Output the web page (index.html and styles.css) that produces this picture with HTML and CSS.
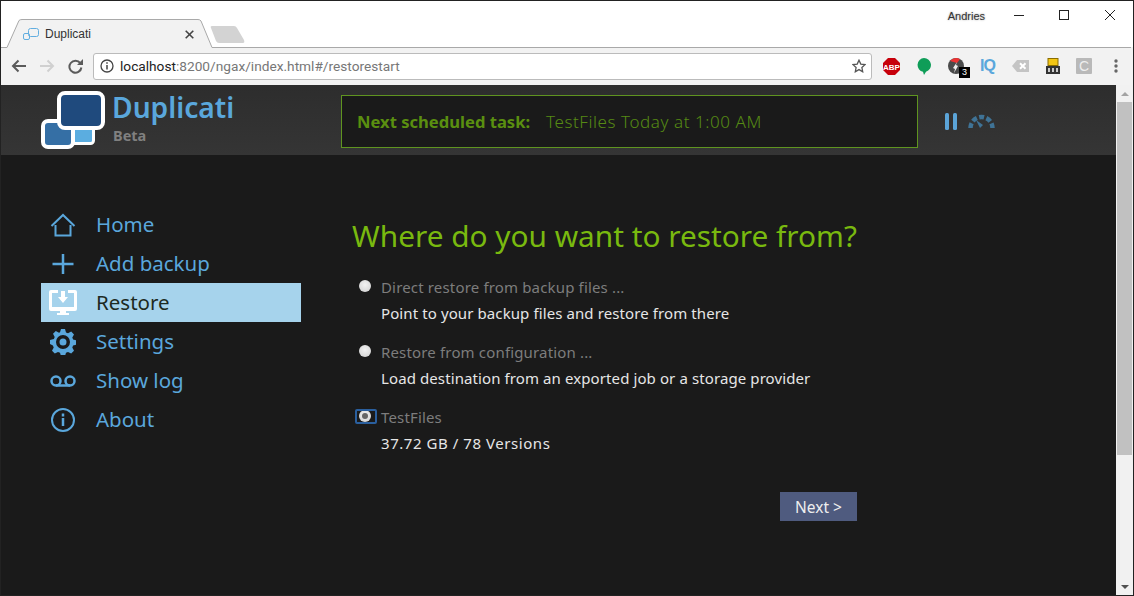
FILE: index.html
```html
<!DOCTYPE html>
<html lang="en">
<head>
<meta charset="utf-8">
<title>Duplicati</title>
<link rel="stylesheet" href="styles.css">
</head>
<body>
<div class="window">
  <div class="tabstrip">
    <svg class="tabshape" width="240" height="47" viewBox="0 0 240 47">
      <path d="M0 46.500H6L18 19.500Q19 18.500 21 18.500H197Q199 18.500 200 20L211 46.500H1130" fill="#f2f2f2" stroke="#a9a9a9"/>
      <path d="M210 27Q209 25 211 25H233Q235 25 236 27L243 39Q244 42 242 42H218Q216 42 215 40Z" fill="#d3d3d3"/>
    </svg>
    <div class="tab">
      <svg class="favicon" width="16" height="13" viewBox="0 0 16 13" fill="none" stroke="#62aee0"><rect x="5.500" y="0.500" width="10" height="8" rx="2"/><rect x="0.500" y="5.500" width="6" height="6" rx="1.500"/></svg>
      <span class="tabtitle">Duplicati</span>
      <svg class="tabclose" width="9" height="9" viewBox="0 0 9 9" stroke="#444" stroke-width="1.600"><path d="M.7.7l7.600 7.600M8.300.7L.7 8.300"/></svg>
    </div>
    <div class="profile">Andries</div>
    <div class="winctl">
      <svg width="46" height="20" viewBox="0 0 46 20" stroke="#222"><path d="M19 14.500H29"/></svg>
      <svg width="46" height="20" viewBox="0 0 46 20" fill="none" stroke="#222"><rect x="18.500" y="9.500" width="9" height="9"/></svg>
      <svg width="46" height="20" viewBox="0 0 46 20" stroke="#222"><path d="M18 9l10 10M28 9L18 19"/></svg>
    </div>
  </div>
  <div class="toolbar">
    <svg class="navicon" width="16" height="14" viewBox="0 0 16 14" fill="none" stroke="#5b5b5b" stroke-width="2"><path d="M15 7H2M7.500 1.500L2 7l5.500 5.500"/></svg>
    <svg class="navicon fwd" width="16" height="14" viewBox="0 0 16 14" fill="none" stroke="#d0d0d0" stroke-width="2"><path d="M1 7h13M8.500 1.500L14 7l-5.500 5.500"/></svg>
    <svg class="navicon reload" width="15" height="15" viewBox="0 0 15 15" fill="none"><path d="M12.300 4.200A6 6 0 1 0 13.400 8.500" stroke="#5b5b5b" stroke-width="2"/><path d="M9 6h6V0z" fill="#5b5b5b"/></svg>
    <div class="omnibox">
      <svg width="14" height="14" viewBox="0 0 14 14" fill="none" stroke="#444" stroke-width="1.300"><circle cx="7" cy="7" r="6"/><path d="M7 6v4.500M7 3.300v1.500" stroke-width="1.500"/></svg>
      <span class="url"><span class="urlhost">localhost</span>:8200/ngax/index.html#/restorestart</span>
      <svg class="star" width="14" height="14" viewBox="0 0 14 14" fill="none" stroke="#555" stroke-width="1.300"><path d="M7 1.200l1.800 3.900 4.200.5-3.100 2.900.8 4.200L7 10.600l-3.700 2.100.8-4.200L1 5.600l4.200-.5z"/></svg>
    </div>
    <div class="exts">
      <svg width="17" height="17" viewBox="0 0 17 17"><path d="M5 0h7l5 5v7l-5 5H5l-5-5V5z" fill="#c7000b"/><text x="8.500" y="11.500" class="abp">ABP</text></svg>
      <svg class="ext-green" width="14" height="17" viewBox="0 0 14 17"><path d="M7 0a7 7 0 0 1 2 13.700L7 17l-1-3.200A7 7 0 0 1 7 0z" fill="#0f9d58"/></svg>
      <span class="extbadge">
        <svg width="16" height="16" viewBox="0 0 16 16"><circle cx="8" cy="8" r="8" fill="#4a4a4a"/><path d="M2 3a7.500 7.500 0 0 1 10-1.800L9 5z" fill="#e33"/><path d="M9 4L5 10l2 1-1 4 4-7-2-1z" fill="#eee"/></svg>
        <span class="badgenum">3</span>
      </span>
      <span class="iq">IQ</span>
      <svg class="ext-del" width="17" height="12" viewBox="0 0 17 12"><path d="M5 0h12v12H5L0 6z" fill="#c4c4c4"/><path d="M8 3.200l5.500 5.500M13.500 3.200L8 8.800" stroke="#fff" stroke-width="2"/></svg>
      <svg class="ext-tab" width="14" height="17" viewBox="0 0 14 17"><rect x="2" y="0.500" width="10" height="7" fill="#f3c614" stroke="#8a6d00"/><rect x="0" y="8" width="14" height="8" fill="#333"/><path d="M3 10v4M7 10v4M11 10v4" stroke="#fff" stroke-width="1.500"/></svg>
      <span class="cext">C</span>
      <svg class="dots" width="4" height="14" viewBox="0 0 4 14" fill="#666"><circle cx="2" cy="2" r="1.700"/><circle cx="2" cy="7" r="1.700"/><circle cx="2" cy="12" r="1.700"/></svg>
    </div>
  </div>
  <div class="viewport">
    <div class="page">
      <header class="apphead">
        <div class="brand">
          <svg class="logo" width="66" height="60" viewBox="0 0 66 60">
            <rect x="30" y="30" width="22.500" height="22.500" rx="3" fill="#5bade0" stroke="#fff" stroke-width="3"/>
            <rect x="2" y="30" width="30" height="26" rx="5" fill="#356fa5" stroke="#fff" stroke-width="4"/>
            <rect x="18" y="2" width="44" height="35" rx="6" fill="#1f4a7d" stroke="#fff" stroke-width="4"/>
          </svg>
          <div class="brandtext">
            <div class="brandname">Duplicati</div>
            <div class="brandsub">Beta</div>
          </div>
        </div>
        <div class="taskbox"><b>Next scheduled task:</b><span>TestFiles Today at 1:00 AM</span></div>
        <svg class="pause" width="12" height="17" viewBox="0 0 12 17" fill="#5ba4d8"><rect width="4" height="17" rx="1.500"/><rect x="8" width="4" height="17" rx="1.500"/></svg>
        <svg class="gauge" width="27" height="15" viewBox="0 0 27 15" fill="none" stroke="#3f7396"><path d="M2.500 14A11 11 0 0 1 24.500 14" stroke-width="4.500" stroke-dasharray="5 2.400"/><path d="M8 6L15 11L12 14z" fill="#3f7396" stroke="none"/></svg>
      </header>
      <div class="appbody">
        <nav class="sidenav">
          <a class="navitem"><span class="ico"><svg width="26" height="24" viewBox="0 0 26 24" fill="none" stroke="currentColor" stroke-width="2"><path d="M5.500 12v10.500h15V12M1.500 13L13 2l11.500 11"/></svg></span><span class="navlabel">Home</span></a>
          <a class="navitem"><span class="ico"><svg width="26" height="24" viewBox="0 0 26 24" fill="none" stroke="currentColor" stroke-width="2.500"><path d="M13 2v20M2.500 12h21"/></svg></span><span class="navlabel">Add backup</span></a>
          <a class="navitem active"><span class="ico"><svg width="28" height="26" viewBox="0 0 28 26"><path d="M2 0h7v3H3v14h22V3h-6V0h7a2 2 0 0 1 2 2v17a2 2 0 0 1-2 2H17v2h3v2H8v-2h3v-2H2a2 2 0 0 1-2-2V2a2 2 0 0 1 2-2z" fill="#fff"/><path d="M12 1h4v6h3l-5 6-5-6h3z" fill="#fff"/></svg></span><span class="navlabel">Restore</span></a>
          <a class="navitem"><span class="ico"><svg width="26" height="26" viewBox="0 0 26 26"><path fill="currentColor" fill-rule="evenodd" d="M11 0h4l1 3.500 2 .8 3.200-1.700 2.800 2.800-1.700 3.200.8 2 3.900 1v4l-3.900 1-.8 2 1.700 3.200-2.800 2.800-3.200-1.700-2 .8-1 3.500h-4l-1-3.500-2-.8-3.200 1.700-2.800-2.800 1.700-3.200-.8-2L0 15v-4l3.900-1 .8-2L3 4.800 5.800 2 9 3.700l1-.4zM13 6a7 7 0 1 0 0 14 7 7 0 0 0 0-14zm0 3.500a3.500 3.500 0 1 1 0 7 3.500 3.500 0 0 1 0-7z"/></svg></span><span class="navlabel">Settings</span></a>
          <a class="navitem"><span class="ico"><svg width="26" height="14" viewBox="0 0 26 14" fill="none" stroke="currentColor" stroke-width="2.500"><circle cx="6" cy="7" r="4.500"/><circle cx="20" cy="7" r="4.500"/><path d="M6 11.500h14"/></svg></span><span class="navlabel">Show log</span></a>
          <a class="navitem"><span class="ico"><svg width="24" height="24" viewBox="0 0 24 24" fill="none" stroke="currentColor" stroke-width="2"><circle cx="12" cy="12" r="11"/><path d="M12 10v8M12 5.500v3" stroke-width="2.500"/></svg></span><span class="navlabel">About</span></a>
        </nav>
        <main class="content">
          <h1 class="title">Where do you want to restore from?</h1>
          <div class="option">
            <span class="radio"></span>
            <div><div class="optname">Direct restore from backup files ...</div><div class="optdesc">Point to your backup files and restore from there</div></div>
          </div>
          <div class="option">
            <span class="radio"></span>
            <div><div class="optname">Restore from configuration ...</div><div class="optdesc">Load destination from an exported job or a storage provider</div></div>
          </div>
          <div class="option">
            <span class="radio checked"></span>
            <div><div class="optname">TestFiles</div><div class="optdesc optstat">37.72 GB / 78 Versions</div></div>
          </div>
          <div class="actions"><button class="next">Next &gt;</button></div>
        </main>
      </div>
    </div>
    <div class="scrollbar">
      <span class="arrow up"></span>
      <span class="thumb"></span>
      <span class="arrow down"></span>
    </div>
  </div>
</div>
</body>
</html>
```
FILE: styles.css
```css
*, *::before, *::after { box-sizing: border-box; }
html, body { margin: 0; height: 100%; overflow: hidden; }
body { font-family: "Noto Sans", sans-serif; background: #fff; }
.window { width: 1134px; height: 596px; display: flex; flex-direction: column; border: 1px solid #222; }
.tabstrip { height: 46px; flex: none; position: relative; display: flex; align-items: flex-start; background: #fff; }
.tabshape { position: absolute; left: 0; top: 0; overflow: visible; }
.tab { position: relative; margin: 26px 0 0 22px; width: 172px; display: flex; align-items: center; font: 12px "Liberation Sans", sans-serif; color: #333; }
.tabtitle { margin-left: 6px; flex: 1; }
.tabclose { margin-right: 1px; }
.profile { position: relative; margin: 9px 0 0 auto; font: 11px "Liberation Sans", sans-serif; color: #333; text-shadow: 0 0 2px #999; }
.winctl { position: relative; display: flex; margin-left: 10px; }
.toolbar { height: 38px; flex: none; background: #f2f2f2; display: flex; align-items: center; padding-left: 10px; }
.navicon { flex: none; }
.fwd { margin-left: 12px; }
.reload { margin-left: 13px; }
.omnibox { margin-left: 10px; width: 779px; height: 27px; background: #fff; border: 1px solid #bbb; border-radius: 3px; display: flex; align-items: center; padding: 0 5px 0 6px; }
.url { margin-left: 6px; flex: 1; font: 13.7px "Roboto", sans-serif; color: #777; white-space: nowrap; }
.urlhost { color: #222; }
.star { margin-left: auto; }
.exts { display: flex; align-items: center; margin-left: 11px; }
.exts > * { flex: none; }
.ext-green { margin-left: 17px; }
.extbadge { position: relative; margin-left: 17px; width: 16px; height: 16px; }
.extbadge svg { display: block; }
.badgenum { position: absolute; left: 11px; top: 9px; width: 11px; height: 11px; background: #000; color: #fff; font: 9px/11px "Liberation Sans", sans-serif; text-align: center; }
.iq { margin-left: 16px; width: 15px; font: bold 16px "Liberation Sans", sans-serif; color: #5aa7dc; letter-spacing: -1px; }
.ext-del { margin-left: 17px; }
.ext-tab { margin-left: 17px; }
.cext { margin-left: 16px; width: 16px; height: 16px; background: #b9b9b9; color: #eee; font: 14px/16px "Liberation Sans", sans-serif; text-align: center; border-radius: 1px; }
.dots { margin-left: 22px; }
.viewport { flex: 1; min-height: 0; display: flex; }
.page { flex: 1; min-width: 0; background: #1a1a1a; display: flex; flex-direction: column; }
.apphead { height: 70px; flex: none; display: flex; align-items: flex-start; background: linear-gradient(#2d2d2d, #353535); }
.brand { width: 340px; flex: none; display: flex; padding: 6px 0 0 40px; }
.logo { flex: none; }
.brandtext { margin-left: 6px; }
.brandname { font-size: 28.2px; line-height: 32px; font-weight: 600; color: #5aa7dc; white-space: nowrap; margin-left: -1px; }
.brandsub { font-size: 14.5px; line-height: 18px; font-weight: 700; color: #808080; margin-top: 3px; }
.taskbox { width: 577px; height: 53px; margin-top: 10px; flex: none; background: #1a1a1a; border: 1px solid #5f9420; display: flex; align-items: center; padding-left: 15px; font-size: 16.6px; color: #568a14; white-space: nowrap; }
.taskbox b { color: #5a8f10; margin-right: 16px; }
.taskbox span { font-size: 17px; font-weight: 300; letter-spacing: .57px; }
.pause { margin: 28px 0 0 27px; flex: none; }
.gauge { margin: 29px 0 0 11px; flex: none; }
.appbody { flex: 1; display: flex; min-height: 0; }
.sidenav { width: 260px; margin: 50px 0 0 40px; flex: none; }
.navitem { height: 39px; display: flex; align-items: center; color: #5aa7dc; font-size: 20.5px; }
.navlabel { margin-top: -2px; }
.ico { flex: none; width: 55px; padding-right: 12px; display: flex; justify-content: center; }
.navitem.active { background: #a6d3ec; color: #1d2a22; }
.content { margin-left: 51px; width: 505px; flex: none; }
.title { margin: 59px 0 16px; font-size: 29.8px; line-height: 44px; font-weight: 400; color: #79b90f; white-space: nowrap; }
.option { display: flex; height: 65px; }
.radio { flex: none; width: 12px; height: 12px; margin: 6px 10px 0 7px; border-radius: 50%; background: radial-gradient(circle at 50% 40%, #f2f2f2, #cfcfcf); position: relative; }
.radio.checked::before { content: ""; position: absolute; left: -4px; top: -1px; width: 22px; height: 15px; border: 2px solid #2a5f9e; border-radius: 2px; }
.radio.checked::after { content: ""; position: absolute; left: 3px; top: 3px; width: 6px; height: 6px; border-radius: 50%; background: #666; }
.optname { font-size: 15px; line-height: 26px; color: #7d7d7d; white-space: nowrap; letter-spacing: .16px; }
.optdesc { font-size: 15px; line-height: 26px; color: #e6e6e6; white-space: nowrap; letter-spacing: .1px; }
.optstat { letter-spacing: .55px; }
.actions { display: flex; justify-content: flex-end; margin-top: 23px; }
.next { width: 77px; height: 29px; background: #4f5b7f; border: 0; padding: 0; color: #eee; font: 15.5px "Noto Sans", sans-serif; }
.scrollbar { width: 17px; flex: none; background: #f1f1f1; display: flex; flex-direction: column; align-items: center; }
.arrow { flex: none; width: 0; height: 0; border-left: 4px solid transparent; border-right: 4px solid transparent; }
.arrow.up { margin-top: 7px; border-bottom: 4px solid #a3a3a3; }
.arrow.down { margin: auto 0 6px; border-top: 4px solid #505050; }
.thumb { margin-top: 6px; width: 15px; height: 353px; flex: none; background: #c1c1c1; }
.abp { font: bold 8px "Liberation Sans", sans-serif; fill: #fff; text-anchor: middle; }
```
